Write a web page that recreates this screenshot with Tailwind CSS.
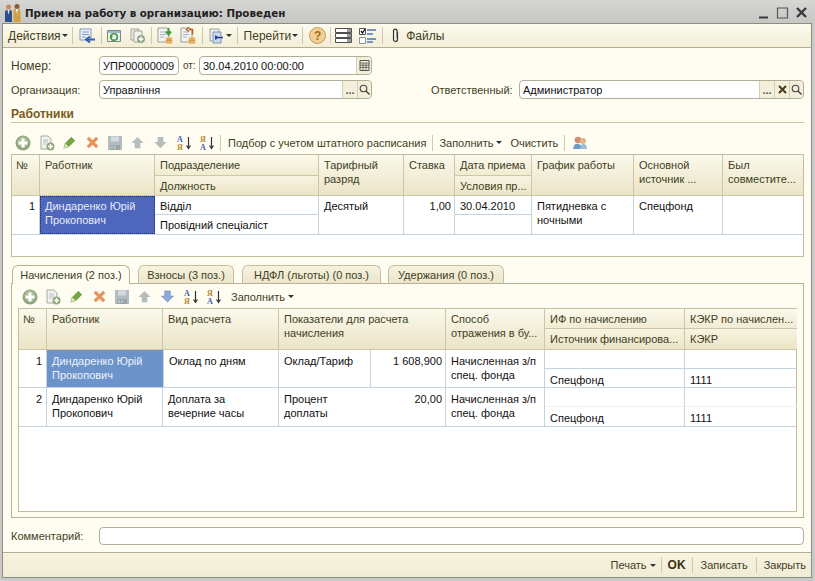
<!DOCTYPE html>
<html>
<head>
    <meta charset='utf-8'>
    <title>Прием на работу в организацию: Проведен</title>
    <script src="https://cdn.jsdelivr.net/npm/@tailwindcss/browser@4"></script>
</head>
<body class="bg-[#c9c9c7] font-['Liberation_Sans',sans-serif] text-[11px] leading-[14px] text-[#111]">

<!-- shared icons -->
<svg class="hidden" xmlns="http://www.w3.org/2000/svg">
    <symbol id="i-plus" viewBox="0 0 16 16"><circle cx="8" cy="8" r="7.5" fill="#8fa77c"/><circle cx="8" cy="7" r="5.5" fill="#a9bd97"/><path d="M8 3.5v9M3.5 8h9" stroke="#fff" stroke-width="3"/></symbol>
    <symbol id="i-docplus" viewBox="0 0 16 16"><path d="M2 1h7l3 3v10H2z" fill="#f4f4ee" stroke="#a8a99c"/><path d="M4 5h5M4 7h5M4 9h3" stroke="#b4bccb"/><circle cx="11.5" cy="11.5" r="4" fill="#8fa77c"/><path d="M11.5 9v5M9 11.5h5" stroke="#fff" stroke-width="1.6"/></symbol>
    <symbol id="i-pencil" viewBox="0 0 16 16"><path d="M2 14l1.5-5L10 2.5l3.5 3.5L7 12.500z" fill="#72a83f" stroke="#4f7f2c" stroke-width=".7"/><path d="M2 14l1.500-5 3.500 3.500z" fill="#e8e4c4"/></symbol>
    <symbol id="i-x" viewBox="0 0 16 16"><path d="M3 3l10 10M13 3L3 13" stroke="#e8935a" stroke-width="3.400"/></symbol>
    <symbol id="i-save" viewBox="0 0 16 16"><path d="M1 1h14v14H1z" fill="#b3bcc0"/><path d="M4 1.500h8v5H4z" fill="#d5dadb"/><path d="M3 10h10v5H3z" fill="#9aa5a9"/><path d="M5 11v3M8 11v3" stroke="#d5dadb"/></symbol>
    <symbol id="i-up" viewBox="0 0 16 16"><path d="M8 2l6.500 6.500H11V14H5V8.500H1.500z" fill="#b5bdbd"/></symbol>
    <symbol id="i-down" viewBox="0 0 16 16"><path d="M8 14L1.500 7.500H5V2h6v5.500h3.500z" fill="#b5bdbd"/></symbol>
    <symbol id="i-down2" viewBox="0 0 16 16"><path d="M8 14L1.500 7.500H5V2h6v5.500h3.500z" fill="#8eaad8" stroke="#6f8cc0" stroke-width=".6"/></symbol>
    <symbol id="i-sortaz" viewBox="0 0 16 16"><text x="1" y="7" font-size="8" font-family="Liberation Serif" font-weight="700" fill="#3c5cae">А</text><text x="1" y="15" font-size="8" font-family="Liberation Serif" font-weight="700" fill="#b68a2e">Я</text><path d="M12.500 2v11M10.500 10.500l2 3 2-3" stroke="#333" fill="none" stroke-width="1.200"/></symbol>
    <symbol id="i-sortza" viewBox="0 0 16 16"><text x="1" y="7" font-size="8" font-family="Liberation Serif" font-weight="700" fill="#b68a2e">Я</text><text x="1" y="15" font-size="8" font-family="Liberation Serif" font-weight="700" fill="#3c5cae">А</text><path d="M12.500 2v11M10.500 10.500l2 3 2-3" stroke="#333" fill="none" stroke-width="1.200"/></symbol>
    <symbol id="i-coins" viewBox="0 0 8 7"><ellipse cx="4" cy="1.500" rx="3.500" ry="1.300" fill="#eab35e"/><ellipse cx="4" cy="3.500" rx="3.500" ry="1.300" fill="#d99a44"/><ellipse cx="4" cy="5.500" rx="3.500" ry="1.300" fill="#eab35e"/></symbol>
</svg>

<div class="flex flex-col w-[815px] h-[581px] overflow-hidden">

    <!-- title -->
    <div class="flex items-center h-[23px] pl-[4px] pt-[2px] shrink-0 bg-gradient-to-b from-[#d6d6d4] to-[#c6c6c4]">
        <svg class="w-[18px] h-[19px]" viewBox="0 0 18 19">
            <circle cx="4.500" cy="4" r="2.500" fill="#c98a4e"/><path d="M1 19V9q0-2 2-2h3q2 0 2 2v10z" fill="#2f4f8f"/><path d="M3.500 7h2l-1 5z" fill="#eee"/>
            <circle cx="13" cy="3.500" r="2.500" fill="#8a5a2e"/><path d="M9.500 19V8q0-2 2-2h3q2 0 2 2v11z" fill="#d0a13e"/><path d="M12 6h2l-1 5z" fill="#fff"/>
        </svg>
        <span class="ml-[3px] font-['DejaVu_Sans'] font-bold text-[10.3px] text-[#222]">Прием на работу в организацию: Проведен</span>
        <div class="ml-auto flex items-center gap-[6px] pr-[7px] text-[#444]">
            <svg class="w-[13px] h-[13px]" viewBox="0 0 13 13"><path d="M2 11.500h9" stroke="#3a3a3a" stroke-width="2"/></svg>
            <svg class="w-[13px] h-[13px]" viewBox="0 0 13 13"><path d="M1.500 2h10v10h-10z" fill="none" stroke="#555" stroke-width="1.200"/></svg>
            <svg class="w-[13px] h-[13px]" viewBox="0 0 13 13"><path d="M2 2l9 9M11 2l-9 9" stroke="#3a3a3a" stroke-width="2.400"/></svg>
        </div>
    </div>

    <!-- window -->
    <div class="flex flex-col h-[555px] ml-[2px] mr-[3px] border border-[#8d8d80] bg-[#fffdf1] text-[#403e1e]">

        <!-- main toolbar -->
        <div class="flex items-center h-[24px] shrink-0 border-b border-[#b3ad90] bg-gradient-to-b from-[#fdfbee] to-[#f2eed8] pl-[5px] text-[12px]">
            <span>Действия</span>
            <span class="ml-[1px] border-x-[3px] border-t-[3px] border-x-transparent border-t-[#333]"></span>
            <span class="ml-[4px] w-px h-[17px] bg-[#cfc9ac]"></span>
            <svg class="ml-[6px] w-[17px] h-[16px]" viewBox="0 0 17 16"><path d="M1 1h11v11H1z" fill="#eef2fa" stroke="#7f94bb"/><path d="M3 4h7M3 6.500h7M3 9h4" stroke="#7f94bb"/><path d="M16 11.500H8M11 8.500l-4 3 4 3" stroke="#2f62b0" stroke-width="2" fill="none"/></svg>
            <span class="ml-[5px] w-px h-[17px] bg-[#cfc9ac]"></span>
            <svg class="ml-[4px] w-[16px] h-[16px]" viewBox="0 0 16 16"><path d="M1.500 2.500h13v11h-13z" fill="#e9f0e8" stroke="#7c8a86"/><path d="M2 3h12v2H2z" fill="#9fb6c8"/><circle cx="8" cy="9" r="3.300" fill="none" stroke="#3f9a48" stroke-width="1.600"/><path d="M4 8h3L5 11z" fill="#3f9a48"/></svg>
            <svg class="ml-[8px] w-[16px] h-[16px]" viewBox="0 0 16 16"><path d="M1 1h8v11H1z" fill="#e9e9e2" stroke="#a3a599"/><path d="M4 3h8v11H4z" fill="#f4f4ee" stroke="#a3a599"/><circle cx="11" cy="11" r="4" fill="#8fa77c"/><path d="M11 8.500v5M8.500 11h5" stroke="#fff" stroke-width="1.500"/></svg>
            <span class="ml-[5px] w-px h-[17px] bg-[#cfc9ac]"></span>
            <svg class="ml-[5px] w-[16px] h-[18px]" viewBox="0 0 16 18"><path d="M1 1h9l2 2v12H1z" fill="#f4f4ee" stroke="#9c9e92"/><path d="M3 5h6M3 7.500h6M3 10h4" stroke="#a8b2c4"/><path d="M11.500 1v6M9 4.500l2.500 3 2.500-3" stroke="#3f9a48" stroke-width="2" fill="none"/><use href="#i-coins" x="8" y="10" width="8" height="7"/></svg>
            <svg class="ml-[7px] w-[16px] h-[18px]" viewBox="0 0 16 18"><path d="M1 1h9l2 2v12H1z" fill="#f4f4ee" stroke="#9c9e92"/><path d="M3 5h6M3 7.500h6M3 10h4" stroke="#a8b2c4"/><path d="M9 2.500h3.500v5M9 .5 6.500 2.500 9 4.500" stroke="#b5602c" stroke-width="1.600" fill="none"/><use href="#i-coins" x="8" y="10" width="8" height="7"/></svg>
            <span class="ml-[6px] w-px h-[17px] bg-[#cfc9ac]"></span>
            <svg class="ml-[6px] w-[15px] h-[16px]" viewBox="0 0 15 16"><path d="M1 1h9v12H1z" fill="#eef0ee" stroke="#9a9e96"/><path d="M4 4h8v11H4z" fill="#cdd9ea" stroke="#8294b6"/><path d="M6 7l4 2.500L6 12z" fill="#23479a"/><path d="M14 9.500H8" stroke="#23479a" stroke-width="1.500"/></svg>
            <span class="ml-[2px] border-x-[3px] border-t-[3px] border-x-transparent border-t-[#333]"></span>
            <span class="ml-[5px] w-px h-[17px] bg-[#cfc9ac]"></span>
            <span class="ml-[6px]">Перейти</span>
            <span class="ml-[1px] border-x-[3px] border-t-[3px] border-x-transparent border-t-[#333]"></span>
            <span class="ml-[4px] w-px h-[17px] bg-[#cfc9ac]"></span>
            <span class="ml-[6px] flex items-center justify-center w-[17px] h-[17px] rounded-full border border-[#c09a58] bg-[#f2cf94] text-[#a26a20] text-[12px] font-bold">?</span>
            <span class="ml-[4px] w-px h-[17px] bg-[#cfc9ac]"></span>
            <svg class="ml-[4px] w-[17px] h-[16px]" viewBox="0 0 17 16"><path d="M.5.500h16v4H.5zM.5 5.500h16v4H.5zM.5 10.500h16v4H.5z" fill="#fff" stroke="#4f4f4f"/><path d="M12 1h4v3h-4zM12 6h4v3h-4zM12 11h4v3h-4z" fill="#9a9a9a"/></svg>
            <svg class="ml-[7px] w-[17px] h-[16px]" viewBox="0 0 17 16"><path d="M.5.500h6v6h-6z" fill="#fff" stroke="#555"/><path d="M2 3l1.500 2L6 1" stroke="#111" fill="none" stroke-width="1.300"/><path d="M.5 9.500h6v6h-6z" fill="#fff" stroke="#8b93a8"/><path d="M8 1h9v2H8zM8 5h6v2H8zM8 10h9v2H8zM8 13h6v2H8z" fill="#6f95c6"/></svg>
            <span class="ml-[6px] w-px h-[17px] bg-[#cfc9ac]"></span>
            <svg class="ml-[9px] w-[7px] h-[15px]" viewBox="0 0 7 15"><path d="M5.500 4v7.500a2 2 0 0 1-4 0V3a1.800 1.800 0 0 1 3.600 0v7" fill="none" stroke="#333" stroke-width="1.200"/></svg>
            <span class="ml-[7px]">Файлы</span>
        </div>

        <!-- document body -->
        <div class="flex flex-col flex-1 pl-[8px] pr-[7px]">

            <div class="flex items-center h-[19px] mt-[8px]">
                <span class="w-[88px] text-[12px]">Номер:</span>
                <div class="flex items-center w-[80px] h-full rounded-[4px] border border-[#b3ae96] bg-white px-[3px] text-[#111] whitespace-nowrap">УПР00000009</div>
                <span class="ml-[4px] w-[16px] text-[10px]">от:</span>
                <div class="flex items-center w-[173px] h-full rounded-[4px] border border-[#b3ae96] bg-white pl-[3px] text-[#111]">
                    30.04.2010 00:00:00
                    <span class="ml-auto flex items-center justify-center w-[15px] h-full border-l border-[#d5d0b4] bg-[#f3efdb] rounded-r-[4px]">
                        <svg class="w-[11px] h-[11px]" viewBox="0 0 11 11"><path d="M1 .5h9v10H1z" fill="#f3efdb" stroke="#555"/><path d="M1 3h9M1 5.200h9M1 7.400h9M4 3v7M7 3v7" stroke="#555" stroke-width=".8"/></svg>
                    </span>
                </div>
            </div>

            <div class="flex items-center h-[19px] mt-[5px]">
                <span class="w-[88px]">Организация:</span>
                <div class="flex items-center w-[273px] h-full rounded-[4px] border border-[#b3ae96] bg-white pl-[3px] text-[#111]">
                    Управління
                    <span class="ml-auto flex items-center justify-center w-[15px] h-full border-l border-[#d5d0b4] bg-[#f3efdb] font-bold text-[#555] leading-[8px]">...</span>
                    <span class="flex items-center justify-center w-[14px] h-full border-l border-[#d5d0b4] bg-[#f3efdb] rounded-r-[4px]">
                        <svg class="w-[11px] h-[11px]" viewBox="0 0 11 11"><circle cx="4.500" cy="4.500" r="3.300" fill="none" stroke="#444" stroke-width="1.100"/><path d="M7 7l3.500 3.500" stroke="#444" stroke-width="1.400"/></svg>
                    </span>
                </div>
                <span class="ml-[59px] w-[88px]">Ответственный:</span>
                <div class="flex items-center flex-1 h-full rounded-[4px] border border-[#b3ae96] bg-white pl-[3px] text-[#111]">
                    Администратор
                    <span class="ml-auto flex items-center justify-center w-[15px] h-full border-l border-[#d5d0b4] bg-[#f3efdb] font-bold text-[#555] leading-[8px]">...</span>
                    <span class="flex items-center justify-center w-[15px] h-full border-l border-[#d5d0b4] bg-[#f3efdb]">
                        <svg class="w-[9px] h-[9px]" viewBox="0 0 9 9"><path d="M1 1l7 7M8 1L1 8" stroke="#4a3a1a" stroke-width="2"/></svg>
                    </span>
                    <span class="flex items-center justify-center w-[14px] h-full border-l border-[#d5d0b4] bg-[#f3efdb] rounded-r-[4px]">
                        <svg class="w-[11px] h-[11px]" viewBox="0 0 11 11"><circle cx="4.500" cy="4.500" r="3.300" fill="none" stroke="#444" stroke-width="1.100"/><path d="M7 7l3.500 3.500" stroke="#444" stroke-width="1.400"/></svg>
                    </span>
                </div>
            </div>

            <div class="h-[15px] mt-[9px] border-b border-[#c9c3a4] font-bold text-[12px] text-[#7a5a22] leading-[13px]">Работники</div>

            <!-- workers toolbar -->
            <div class="flex items-center h-[17px] mt-[11px] pl-[4px]">
                <svg class="w-[16px] h-[16px]"><use href="#i-plus"/></svg>
                <svg class="ml-[8px] w-[16px] h-[16px]"><use href="#i-docplus"/></svg>
                <svg class="ml-[7px] w-[15px] h-[15px]"><use href="#i-pencil"/></svg>
                <svg class="ml-[8px] w-[15px] h-[15px]"><use href="#i-x"/></svg>
                <svg class="ml-[7px] w-[16px] h-[16px]"><use href="#i-save"/></svg>
                <svg class="ml-[7px] w-[15px] h-[15px]"><use href="#i-up"/></svg>
                <svg class="ml-[8px] w-[15px] h-[15px]"><use href="#i-down"/></svg>
                <svg class="ml-[8px] w-[16px] h-[16px]"><use href="#i-sortaz"/></svg>
                <svg class="ml-[7px] w-[16px] h-[16px]"><use href="#i-sortza"/></svg>
                <span class="ml-[5px] w-px h-[16px] bg-[#cfc9ac]"></span>
                <span class="ml-[7px] whitespace-nowrap">Подбор с учетом штатного расписания</span>
                <span class="ml-[6px] w-px h-[16px] bg-[#cfc9ac]"></span>
                <span class="ml-[6px]">Заполнить</span>
                <span class="ml-[3px] border-x-[3px] border-t-[3px] border-x-transparent border-t-[#333]"></span>
                <span class="ml-[8px]">Очистить</span>
                <span class="ml-[6px] w-px h-[16px] bg-[#cfc9ac]"></span>
                <svg class="ml-[7px] w-[16px] h-[16px]" viewBox="0 0 16 16"><circle cx="6" cy="5" r="3.300" fill="#d08f70"/><circle cx="11" cy="6" r="3" fill="#e2b58a"/><path d="M1 14q1-6 5-5 3 0 5 5z" fill="#6d98c8"/><path d="M8 14q1-5 3-5 4 0 4 5z" fill="#9bbcdc"/></svg>
            </div>

            <!-- workers table -->
            <div class="mt-[3px] h-[103px] border border-[#c4bd9b] bg-white">
                <div class="grid grid-cols-[28px_115px_164px_85px_51px_77px_102px_89px_80px] grid-rows-[21px_20px_19px_19px] border-b border-[#c5d3df]">
                    <div class="row-span-2 px-[4px] pt-[3px] border-r border-b border-[#cdc7a8] bg-gradient-to-b from-[#fbf9ec] to-[#ebe4c6]">№</div>
                    <div class="row-span-2 px-[5px] pt-[3px] border-r border-b border-[#cdc7a8] bg-gradient-to-b from-[#fbf9ec] to-[#ebe4c6]">Работник</div>
                    <div class="px-[5px] pt-[3px] border-r border-b border-[#cdc7a8] bg-gradient-to-b from-[#fbf9ec] to-[#f1ebd2]">Подразделение</div>
                    <div class="row-span-2 px-[5px] pt-[3px] border-r border-b border-[#cdc7a8] bg-gradient-to-b from-[#fbf9ec] to-[#ebe4c6]">Тарифный разряд</div>
                    <div class="row-span-2 px-[5px] pt-[3px] border-r border-b border-[#cdc7a8] bg-gradient-to-b from-[#fbf9ec] to-[#ebe4c6]">Ставка</div>
                    <div class="px-[5px] pt-[3px] border-r border-b border-[#cdc7a8] bg-gradient-to-b from-[#fbf9ec] to-[#f1ebd2] whitespace-nowrap">Дата приема</div>
                    <div class="row-span-2 px-[5px] pt-[3px] border-r border-b border-[#cdc7a8] bg-gradient-to-b from-[#fbf9ec] to-[#ebe4c6]">График работы</div>
                    <div class="row-span-2 px-[5px] pt-[3px] border-r border-b border-[#cdc7a8] bg-gradient-to-b from-[#fbf9ec] to-[#ebe4c6]">Основной источник ...</div>
                    <div class="row-span-2 px-[5px] pt-[3px] border-b border-[#cdc7a8] bg-gradient-to-b from-[#fbf9ec] to-[#ebe4c6]">Был совместите...</div>
                    <div class="col-start-3 row-start-2 px-[5px] pt-[3px] border-r border-b border-[#cdc7a8] bg-gradient-to-b from-[#f8f4e2] to-[#ebe4c6]">Должность</div>
                    <div class="col-start-6 row-start-2 px-[5px] pt-[3px] border-r border-b border-[#cdc7a8] bg-gradient-to-b from-[#f8f4e2] to-[#ebe4c6] whitespace-nowrap">Условия пр...</div>

                    <div class="row-span-2 pr-[4px] pt-[3px] text-right border-r border-[#c5d3df] text-[#111]">1</div>
                    <div class="row-span-2 px-[5px] pt-[3px] bg-[#4e67bd] text-[#e8ecf8] outline-1 -outline-offset-1 outline-dotted outline-[#1c2c70]">Диндаренко Юрій Прокопович</div>
                    <div class="px-[5px] pt-[3px] border-r border-b border-[#c5d3df] text-[#111]">Відділ</div>
                    <div class="row-span-2 px-[5px] pt-[3px] border-r border-[#c5d3df] text-[#111]">Десятый</div>
                    <div class="row-span-2 pr-[3px] pt-[3px] text-right border-r border-[#c5d3df] text-[#111]">1,00</div>
                    <div class="px-[5px] pt-[3px] border-r border-b border-[#c5d3df] text-[#111]">30.04.2010</div>
                    <div class="row-span-2 px-[5px] pt-[3px] border-r border-[#c5d3df] text-[#111]">Пятидневка с ночными</div>
                    <div class="row-span-2 px-[5px] pt-[3px] border-r border-[#c5d3df] text-[#111]">Спецфонд</div>
                    <div class="row-span-2"></div>
                    <div class="col-start-3 row-start-4 px-[5px] pt-[3px] border-r border-[#c5d3df] text-[#111]">Провідний спеціаліст</div>
                    <div class="col-start-6 row-start-4 border-r border-[#c5d3df]"></div>
                </div>
            </div>

            <!-- tabs -->
            <div class="flex items-end h-[18px] mt-[8px] pl-[1px]">
                <div class="flex items-center justify-center w-[118px] h-[19px] rounded-t-[6px] border border-b-0 border-[#b8b294] bg-[#fffdf1] relative top-px z-10">Начисления (2 поз.)</div>
                <div class="flex items-center justify-center ml-[8px] w-[96px] h-[18px] rounded-t-[6px] border border-b-0 border-[#c4bf9f] bg-gradient-to-b from-[#f6f2de] to-[#ebe6cc]">Взносы (3 поз.)</div>
                <div class="flex items-center justify-center ml-[8px] w-[139px] h-[18px] rounded-t-[6px] border border-b-0 border-[#c4bf9f] bg-gradient-to-b from-[#f6f2de] to-[#ebe6cc]">НДФЛ (льготы) (0 поз.)</div>
                <div class="flex items-center justify-center ml-[7px] w-[116px] h-[18px] rounded-t-[6px] border border-b-0 border-[#c4bf9f] bg-gradient-to-b from-[#f6f2de] to-[#ebe6cc]">Удержания (0 поз.)</div>
            </div>

            <!-- tab panel -->
            <div class="flex flex-col h-[235px] border border-[#b8b294] px-[6px]">
                <div class="flex items-center h-[17px] mt-[4px] pl-[4px]">
                    <svg class="w-[16px] h-[16px]"><use href="#i-plus"/></svg>
                    <svg class="ml-[7px] w-[16px] h-[16px]"><use href="#i-docplus"/></svg>
                    <svg class="ml-[8px] w-[15px] h-[15px]"><use href="#i-pencil"/></svg>
                    <svg class="ml-[8px] w-[15px] h-[15px]"><use href="#i-x"/></svg>
                    <svg class="ml-[7px] w-[16px] h-[16px]"><use href="#i-save"/></svg>
                    <svg class="ml-[7px] w-[15px] h-[15px]"><use href="#i-up"/></svg>
                    <svg class="ml-[8px] w-[15px] h-[15px]"><use href="#i-down2"/></svg>
                    <svg class="ml-[8px] w-[16px] h-[16px]"><use href="#i-sortaz"/></svg>
                    <svg class="ml-[7px] w-[16px] h-[16px]"><use href="#i-sortza"/></svg>
                    <span class="ml-[9px]">Заполнить</span>
                    <span class="ml-[3px] border-x-[3px] border-t-[3px] border-x-transparent border-t-[#333]"></span>
                </div>

                <div class="mt-[3px] h-[204px] border border-[#c4bd9b] bg-white">
                    <div class="grid grid-cols-[28px_116px_116px_92px_75px_99px_140px_112px] grid-rows-[20px_21px_19px_19px_19px_19px] border-b border-[#c5d3df]">
                        <div class="row-span-2 px-[4px] pt-[3px] border-r border-b border-[#cdc7a8] bg-gradient-to-b from-[#fbf9ec] to-[#ebe4c6]">№</div>
                        <div class="row-span-2 px-[5px] pt-[3px] border-r border-b border-[#cdc7a8] bg-gradient-to-b from-[#fbf9ec] to-[#ebe4c6]">Работник</div>
                        <div class="row-span-2 px-[5px] pt-[3px] border-r border-b border-[#cdc7a8] bg-gradient-to-b from-[#fbf9ec] to-[#ebe4c6]">Вид расчета</div>
                        <div class="col-span-2 row-span-2 px-[5px] pt-[3px] border-r border-b border-[#cdc7a8] bg-gradient-to-b from-[#fbf9ec] to-[#ebe4c6]">Показатели для расчета начисления</div>
                        <div class="row-span-2 px-[5px] pt-[3px] border-r border-b border-[#cdc7a8] bg-gradient-to-b from-[#fbf9ec] to-[#ebe4c6]">Способ отражения в бу...</div>
                        <div class="px-[5px] pt-[3px] border-r border-b border-[#cdc7a8] bg-gradient-to-b from-[#fbf9ec] to-[#f1ebd2]">ИФ по начислению</div>
                        <div class="px-[5px] pt-[3px] border-b border-[#cdc7a8] bg-gradient-to-b from-[#fbf9ec] to-[#f1ebd2] whitespace-nowrap">КЭКР по начислен...</div>
                        <div class="col-start-7 row-start-2 px-[5px] pt-[3px] border-r border-b border-[#cdc7a8] bg-gradient-to-b from-[#f8f4e2] to-[#ebe4c6] whitespace-nowrap">Источник финансирова...</div>
                        <div class="col-start-8 row-start-2 px-[5px] pt-[3px] border-b border-[#cdc7a8] bg-gradient-to-b from-[#f8f4e2] to-[#ebe4c6]">КЭКР</div>

                        <div class="row-span-2 pr-[4px] pt-[4px] text-right border-r border-b border-[#c5d3df] text-[#111]">1</div>
                        <div class="row-span-2 px-[5px] pt-[4px] bg-[#6c94ca] text-[#eef3fa] border-b border-[#c5d3df]">Диндаренко Юрій Прокопович</div>
                        <div class="row-span-2 px-[5px] pt-[4px] border-x border-b border-[#c5d3df] text-[#111]">Оклад по дням</div>
                        <div class="row-span-2 px-[5px] pt-[4px] border-r border-b border-[#c5d3df] text-[#111]">Оклад/Тариф</div>
                        <div class="row-span-2 pr-[3px] pt-[4px] text-right border-r border-b border-[#c5d3df] text-[#111]">1 608,900</div>
                        <div class="row-span-2 px-[5px] pt-[4px] border-r border-b border-[#c5d3df] text-[#111]">Начисленная з/п спец. фонда</div>
                        <div class="border-r border-b border-[#c5d3df]"></div>
                        <div class="border-b border-[#c5d3df]"></div>
                        <div class="col-start-7 row-start-4 px-[5px] pt-[4px] border-r border-b border-[#c5d3df] text-[#111]">Спецфонд</div>
                        <div class="col-start-8 row-start-4 px-[5px] pt-[4px] border-b border-[#c5d3df] text-[#111]">1111</div>

                        <div class="row-span-2 pr-[4px] pt-[4px] text-right border-r border-[#c5d3df] text-[#111]">2</div>
                        <div class="row-span-2 px-[5px] pt-[4px] border-r border-[#c5d3df] text-[#111]">Диндаренко Юрій Прокопович</div>
                        <div class="row-span-2 px-[5px] pt-[4px] border-r border-[#c5d3df] text-[#111]">Доплата за вечерние часы</div>
                        <div class="row-span-2 px-[5px] pt-[4px] text-[#111]">Процент доплаты</div>
                        <div class="row-span-2 pr-[3px] pt-[4px] text-right border-r border-[#c5d3df] text-[#111]">20,00</div>
                        <div class="row-span-2 px-[5px] pt-[4px] border-r border-[#c5d3df] text-[#111]">Начисленная з/п спец. фонда</div>
                        <div class="border-r border-b border-r-[#c5d3df] border-b-[#eef2f6]"></div>
                        <div class="border-b border-[#eef2f6]"></div>
                        <div class="col-start-7 row-start-6 px-[5px] pt-[4px] border-r border-[#c5d3df] text-[#111]">Спецфонд</div>
                        <div class="col-start-8 row-start-6 px-[5px] pt-[4px] text-[#111]">1111</div>
                    </div>
                </div>
            </div>

            <!-- comment -->
            <div class="flex items-center h-[18px] mt-[9px]">
                <span class="w-[88px]">Комментарий:</span>
                <div class="flex-1 h-full rounded-[4px] border border-[#b3ae96] bg-white"></div>
            </div>
        </div>

        <!-- bottom bar -->
        <div class="flex items-center justify-end h-[25px] shrink-0 border-t border-[#b3ad90] bg-gradient-to-b from-[#f7f3e0] to-[#f1ecd4] pr-[5px]">
            <span>Печать</span>
            <span class="ml-[3px] border-x-[3px] border-t-[3px] border-x-transparent border-t-[#333]"></span>
            <span class="ml-[5px] w-px h-[16px] bg-[#cfc9ac]"></span>
            <span class="mx-[6px] font-bold text-[12px] text-[#3a3010]">OK</span>
            <span class="w-px h-[16px] bg-[#cfc9ac]"></span>
            <span class="mx-[8px]">Записать</span>
            <span class="w-px h-[16px] bg-[#cfc9ac]"></span>
            <span class="ml-[7px]">Закрыть</span>
        </div>
    </div>
</div>
</body>
</html>
